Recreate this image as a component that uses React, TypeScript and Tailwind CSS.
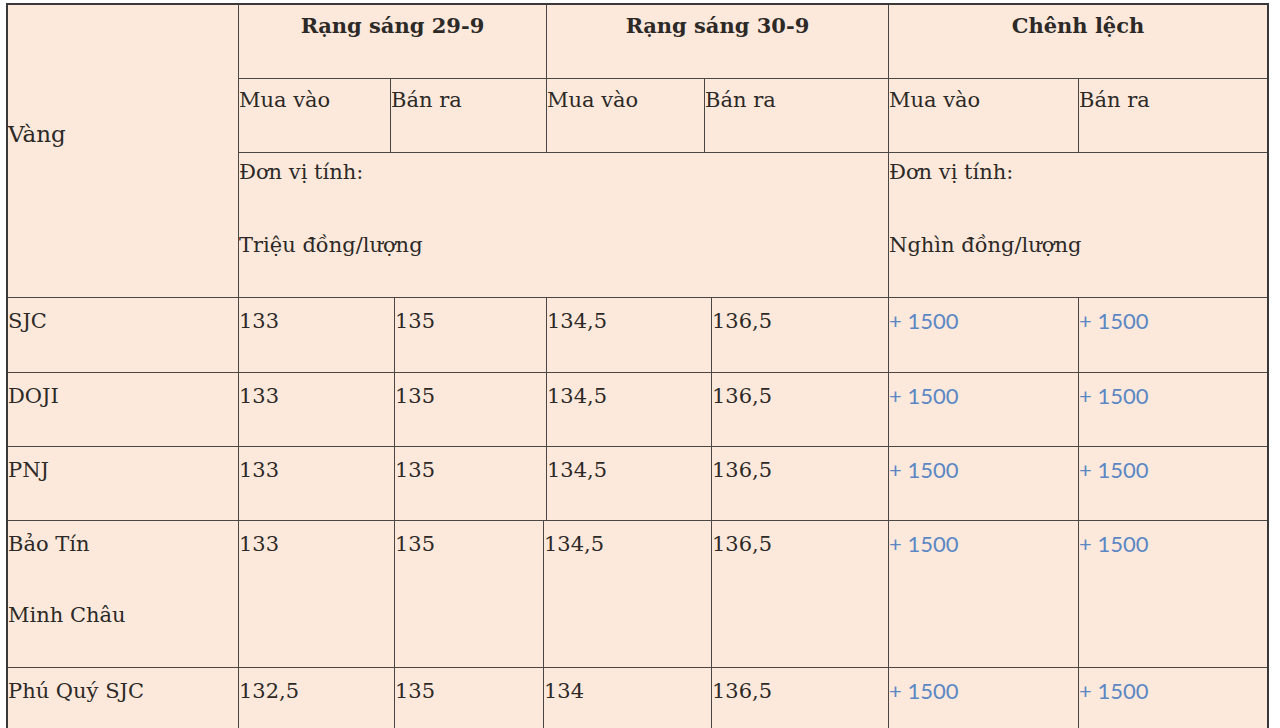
const serif = "font-['DejaVu_Serif',serif]";

type Row = { name: string[]; values: string[]; cols: string; h: string };

const rows: Row[] = [
  { name: ["SJC"], values: ["133", "135", "134,5", "136,5"], cols: "grid-cols-[231px_156px_152px_165px_177px_190px_188px]", h: "h-[75px]" },
  { name: ["DOJI"], values: ["133", "135", "134,5", "136,5"], cols: "grid-cols-[231px_156px_152px_165px_177px_190px_188px]", h: "h-[74px]" },
  { name: ["PNJ"], values: ["133", "135", "134,5", "136,5"], cols: "grid-cols-[231px_156px_152px_165px_177px_190px_188px]", h: "h-[74px]" },
  { name: ["Bảo Tín", "Minh Châu"], values: ["133", "135", "134,5", "136,5"], cols: "grid-cols-[231px_156px_149px_168px_177px_190px_188px]", h: "h-[147px]" },
  { name: ["Phú Quý SJC"], values: ["132,5", "135", "134", "136,5"], cols: "grid-cols-[231px_156px_149px_168px_177px_190px_188px]", h: "h-[147px]" },
];

const line = "border-[#4a4644]";

function Cell({ children, last = false, className = "" }: { children?: React.ReactNode; last?: boolean; className?: string }) {
  return (
    <div className={`border-b ${last ? "" : "border-r"} ${line} leading-[30px] ${className || "pt-[8px]"}`}>
      {children}
    </div>
  );
}

function Diff() {
  return <span className="font-['Lato',sans-serif] text-[22px] text-[#5b87c5]">+ 1500</span>;
}

export default function App() {
  return (
    <div className="min-h-screen bg-white pt-[3px] pl-[6px] overflow-hidden">
      <div className={`w-[1263px] border-2 border-b-0 border-[#3a3838] bg-[#fde9dc] text-[#2c2927] text-[21px] ${serif}`}>
        {/* header block */}
        <div className="grid grid-cols-[231px_1028px]">
          <div className={`h-[293px] border-r border-b ${line} pt-[114px] leading-[30px] text-[23px]`}>Vàng</div>
          <div className="flex flex-col">
            <div className="grid h-[74px] grid-cols-[308px_342px_378px] font-bold text-center">
              <Cell className="pt-[6px]">Rạng sáng 29-9</Cell>
              <Cell className="pt-[6px]">Rạng sáng 30-9</Cell>
              <Cell last className="pt-[6px]">Chênh lệch</Cell>
            </div>
            <div className="grid h-[74px] grid-cols-[152px_156px_158px_184px_190px_188px]">
              <Cell className="pt-[6px]">Mua vào</Cell>
              <Cell className="pt-[6px]">Bán ra</Cell>
              <Cell className="pt-[6px]">Mua vào</Cell>
              <Cell className="pt-[6px]">Bán ra</Cell>
              <Cell className="pt-[6px]">Mua vào</Cell>
              <Cell last className="pt-[6px]">Bán ra</Cell>
            </div>
            <div className="grid h-[145px] grid-cols-[650px_378px]">
              <Cell className="pt-[4px]">
                <div>Đơn vị tính:</div>
                <div className="mt-[43px]">Triệu đồng/lượng</div>
              </Cell>
              <Cell last className="pt-[4px]">
                <div>Đơn vị tính:</div>
                <div className="mt-[43px]">Nghìn đồng/lượng</div>
              </Cell>
            </div>
          </div>
        </div>
        {/* data rows */}
        {rows.map((r) => (
          <div key={r.name.join(" ")} className={`grid ${r.cols} ${r.h}`}>
            <Cell>
              {r.name.map((n, i) => (
                <div key={n} className={i > 0 ? "mt-[41px]" : ""}>{n}</div>
              ))}
            </Cell>
            {r.values.map((v, i) => (
              <Cell key={i}>{v}</Cell>
            ))}
            <Cell><Diff /></Cell>
            <Cell last><Diff /></Cell>
          </div>
        ))}
      </div>
    </div>
  );
}
